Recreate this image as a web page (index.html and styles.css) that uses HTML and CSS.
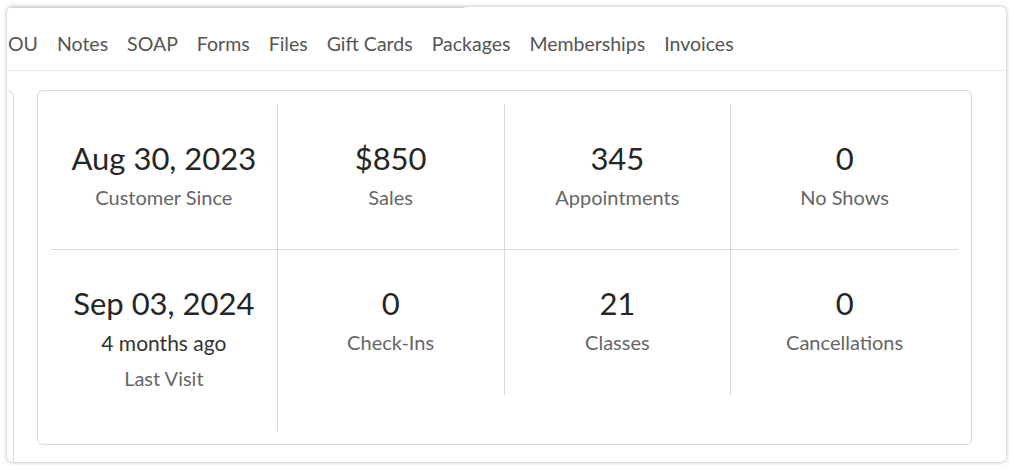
FILE: index.html
```html
<!DOCTYPE html>
<html>
<head>
<meta charset="utf-8">
<link rel="stylesheet" href="styles.css">
</head>
<body>
<div class="frame">
  <div class="topline"></div>
  <nav class="tabs">
    <span class="tab">OU</span>
    <span class="tab">Notes</span>
    <span class="tab">SOAP</span>
    <span class="tab">Forms</span>
    <span class="tab">Files</span>
    <span class="tab">Gift Cards</span>
    <span class="tab">Packages</span>
    <span class="tab">Memberships</span>
    <span class="tab">Invoices</span>
  </nav>
  <div class="content">
    <div class="side"></div>
    <div class="stats">
      <div class="grid">
        <div class="cell top"><div class="value">Aug 30, 2023</div><div class="label">Customer Since</div></div>
        <div class="cell top"><div class="value">$850</div><div class="label">Sales</div></div>
        <div class="cell top"><div class="value">345</div><div class="label">Appointments</div></div>
        <div class="cell top last"><div class="value">0</div><div class="label">No Shows</div></div>
        <div class="cell"><div class="value">Sep 03, 2024</div><div class="sub">4 months ago</div><div class="label label-after">Last Visit</div></div>
        <div class="cell"><div class="value">0</div><div class="label">Check-Ins</div></div>
        <div class="cell"><div class="value">21</div><div class="label">Classes</div></div>
        <div class="cell last"><div class="value">0</div><div class="label">Cancellations</div></div>
      </div>
    </div>
  </div>
</div>
</body>
</html>
```

FILE: styles.css
```css
* { box-sizing: border-box; }
html, body { margin: 0; padding: 0; background: #ffffff; }
body {
  font-family: Lato, "Open Sans", "Liberation Sans", sans-serif;
  padding: 7px 8px 8px 7px;
}
.frame {
  width: 999px;
  height: 455px;
  background: #fff;
  border-radius: 5px;
  box-shadow: 0 0 4px rgba(0,0,0,0.32);
  overflow: hidden;
}
.topline {
  width: 458px;
  height: 1px;
  background: #d6d6d6;
  border-bottom-right-radius: 2px;
}
.tabs {
  display: flex;
  gap: 19px;
  height: 63px;
  padding: 25px 0 0 1px;
  border-bottom: 1px solid #e8e8e8;
  font-size: 19.5px;
  line-height: 22px;
  color: #555;
  white-space: nowrap;
}
.content {
  display: flex;
  gap: 23px;
  padding-top: 19px;
  height: 391px;
}
.side {
  width: 7px;
  height: 420px;
  border: 1px solid #dcdcdc;
  border-left: none;
  border-top-right-radius: 7px;
}
.stats {
  width: 935px;
  height: 355px;
  border: 1px solid #d9d9d9;
  border-radius: 6px;
  padding: 13px;
}
.grid {
  display: grid;
  grid-template-columns: repeat(4, 1fr);
  align-items: start;
}
.cell {
  text-align: center;
  padding: 36px 0 42px;
  border-right: 1px solid #d9d9d9;
}
.cell.last { border-right: none; }
.cell.top {
  border-bottom: 1px solid #d9d9d9;
  padding-top: 37px;
  padding-bottom: 41px;
}
.value {
  font-size: 31px;
  line-height: 34px;
  color: #262626;
}
.label {
  margin-top: 11px;
  font-size: 20px;
  line-height: 22px;
  color: #666;
}
.sub {
  margin-top: 12px;
  font-size: 21px;
  line-height: 22px;
  color: #333;
}
.label-after { margin-top: 13px; }
```
